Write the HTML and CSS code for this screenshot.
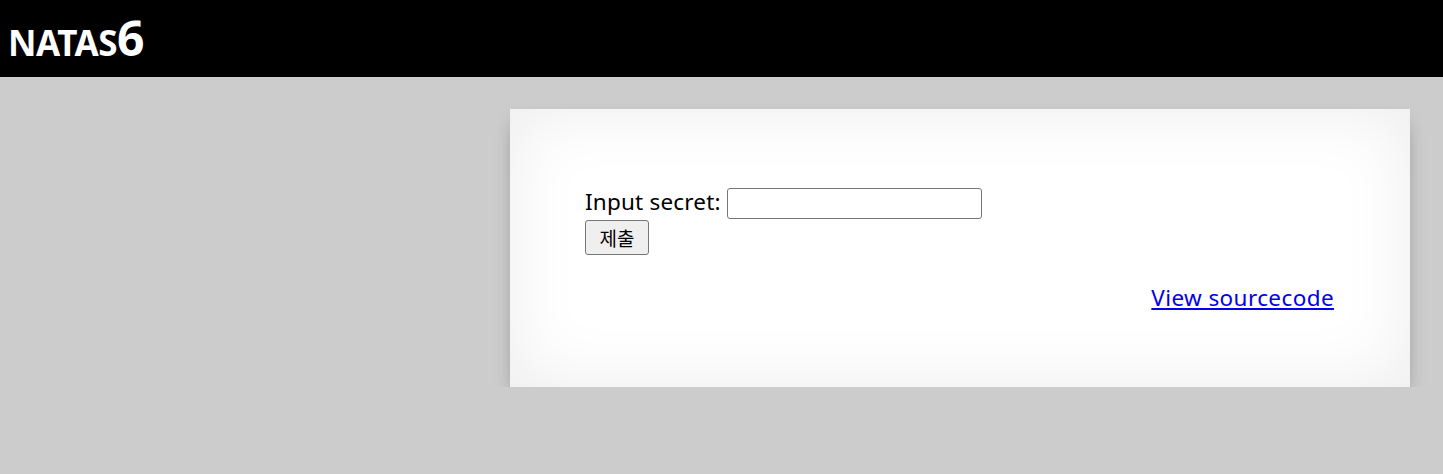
FILE: index.html
```html
<!DOCTYPE html>
<html>
<head>
<meta charset="utf-8">
<title>natas6</title>
<link rel="stylesheet" href="styles.css">
</head>
<body>
<h1 class="title">natas<span class="num">6</span></h1>
<div class="content">
  <form class="form" method="post">
    Input secret: <input class="secret" name="secret"><br>
    <input class="submit" type="submit" name="submit" value="제출">
  </form>
  <div class="viewsource"><a href="#">View sourcecode</a></div>
</div>
</body>
</html>
```

FILE: styles.css
```css
html, body {
  margin: 0;
  padding: 0;
}
body {
  background: #cccccc;
  font-family: "Noto Sans", "Noto Sans CJK KR", sans-serif;
  font-size: 22.5px;
  line-height: 1.2;
  color: #000;
  overflow: hidden;
}
.title {
  margin: 0;
  height: 77px;
  box-sizing: border-box;
  background: #000;
  color: #fff;
  padding: 13px 0 0 8px;
  font-size: 35px;
  font-weight: bold;
  line-height: 50px;
  text-transform: uppercase;
  letter-spacing: -0.5px;
}
.num {
  font-size: 48px;
  font-weight: bold;
  letter-spacing: 0;
}
.content {
  width: 900px;
  box-sizing: border-box;
  margin: 32px 0 0 510px;
  padding: 75px 76px 75px 75px;
  height: 278px;
  background: #fff;
  box-shadow: inset 0 0 70px rgba(0,0,0,0.08), 0 10px 18px -6px rgba(0,0,0,0.4);
}
.form {
  margin: 0;
  line-height: 36px;
  letter-spacing: 0.2px;
}
.secret {
  width: 255px;
  height: 31px;
  box-sizing: border-box;
  border: 1px solid #767676;
  border-radius: 3px;
  vertical-align: top;
  margin: 4px 0 0 0;
  padding: 0 4px;
  font-size: 16px;
}
.submit {
  display: inline-block;
  width: 64px;
  height: 35px;
  box-sizing: border-box;
  border: 1px solid #767676;
  border-radius: 3px;
  background: #efefef;
  color: #000;
  font-family: "Noto Sans CJK KR", sans-serif;
  font-size: 19px;
  padding: 0;
  margin: 0;
  vertical-align: top;
}
.viewsource {
  text-align: right;
  margin-top: 28px;
  line-height: 28px;
  letter-spacing: 0.4px;
}
.viewsource a {
  color: #0000ee;
}
```
